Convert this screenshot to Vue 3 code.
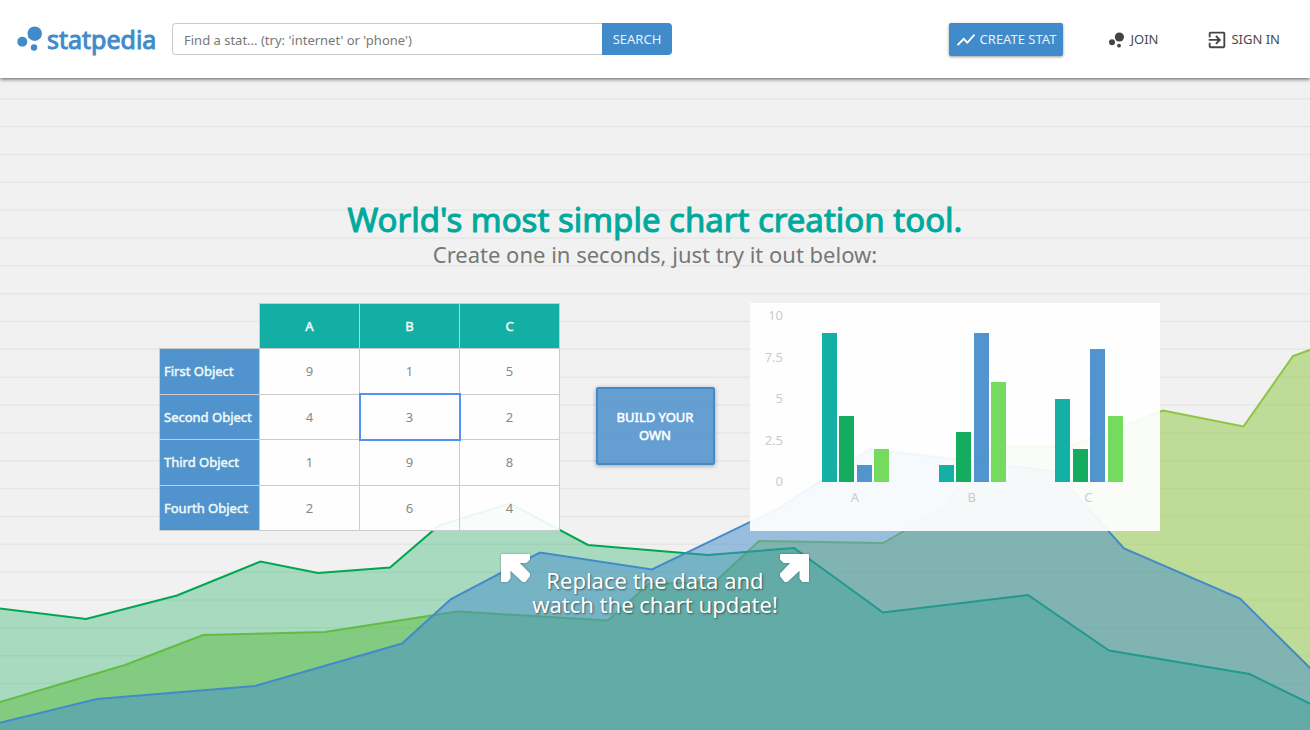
<script setup>
import { computed, ref } from 'vue'

const columns = ['A', 'B', 'C']
const rows = ref([
  { name: 'First Object', color: '#00a99d', values: [9, 1, 5] },
  { name: 'Second Object', color: '#00a651', values: [4, 3, 2] },
  { name: 'Third Object', color: '#428bca', values: [1, 9, 8] },
  { name: 'Fourth Object', color: '#68d850', values: [2, 6, 4] }
])
const selected = ref('1-1')
const query = ref('')

const baseline = 179
const unit = 16.6
const plotLeft = 46
const groupWidth = 116.7
const ticks = [10, 7.5, 5, 2.5, 0]

const bars = computed(() =>
  columns.flatMap((column, c) =>
    rows.value.map((row, r) => {
      const height = Math.min(10, Number(row.values[c]) || 0) * unit
      return {
        key: column + r,
        x: Math.round(plotLeft + c * groupWidth + 26 + r * 17.4),
        y: Math.round(baseline - height),
        height: baseline - Math.round(baseline - height),
        color: row.color
      }
    })
  )
)

const rules = Array.from({ length: 23 }, (_, i) => 98.7 + i * 27.85)
</script>

<template>
  <div class="page">
    <header class="topbar">
      <a class="logo" href="#">
        <svg width="27" height="26" viewBox="0 0 27 26" aria-hidden="true">
          <circle cx="17.7" cy="7.7" r="7.2" />
          <circle cx="5.3" cy="15.8" r="5" />
          <circle cx="17" cy="21.5" r="3.2" />
        </svg>
        <span>statpedia</span>
      </a>
      <form class="search" @submit.prevent>
        <input v-model="query" type="text" aria-label="Find a stat" placeholder="Find a stat... (try: 'internet' or 'phone')" />
        <button type="submit">SEARCH</button>
      </form>
      <nav class="actions">
        <a class="create" href="#">
          <svg width="22" height="22" viewBox="0 -1 24 24" aria-hidden="true">
            <path d="M3.5 18.49l6-6.01 4 4L22 6.92l-1.41-1.41-7.09 7.97-4-4L2 16.99z" />
          </svg>
          CREATE STAT
        </a>
        <a class="link" href="#">
          <svg width="18" height="18" viewBox="0 0 18 18" aria-hidden="true">
            <circle cx="11.4" cy="7" r="4.6" />
            <circle cx="4" cy="12.3" r="3" />
            <circle cx="11" cy="15.7" r="1.9" />
          </svg>
          JOIN
        </a>
        <a class="link" href="#">
          <svg width="22" height="22" viewBox="0 -1 24 24" aria-hidden="true">
            <path d="M10.09 15.59L11.5 17l5-5-5-5-1.41 1.41L12.67 11H3v2h9.67l-2.58 2.59zM19 3H5c-1.11 0-2 .9-2 2v4h2V5h14v14H5v-4H3v4c0 1.1.89 2 2 2h14c1.1 0 2-.9 2-2V5c0-1.1-.9-2-2-2z" />
          </svg>
          SIGN IN
        </a>
      </nav>
    </header>

    <main class="hero">
      <svg class="backdrop" viewBox="0 78 1310 652" preserveAspectRatio="xMidYMax slice" aria-hidden="true">
        <path v-for="y in rules" :key="y" class="rule" :d="`M-2000 ${y}H4000`" />
        <g class="lime">
          <path class="area" d="M-5 704L0 702 125 665 203 635 325 632 457 611.500 608 620.500 649 584 715 582 759 541 883 543 942 509 994 447 1071 446 1163 410.500 1243.500 426.500 1293 356 1315 348V735H-5z" />
          <path class="line" d="M-5 704L0 702 125 665 203 635 325 632 457 611.500 608 620.500 649 584 715 582 759 541 883 543 942 509 994 447 1071 446 1163 410.500 1243.500 426.500 1293 356 1315 348" />
        </g>
        <g class="green">
          <path class="area" d="M-5 608L86 619 177 595.500 260.500 561.500 318 573 390 567.500 439 525.500 510 503.500 588 545 708 555 794 548 883 612.500 1028 595 1109 650.500 1249.500 674 1315 706V735H-5z" />
          <path class="line" d="M-5 608L86 619 177 595.500 260.500 561.500 318 573 390 567.500 439 525.500 510 503.500 588 545 708 555 794 548 883 612.500 1028 595 1109 650.500 1249.500 674 1315 706" />
        </g>
        <g class="blue">
          <path class="area" d="M-5 724L97 699 255 686 402 643.500 451 599 540 552.500 652 569.500 779 508 870 449 1055 471.500 1124 548.500 1240 598.500 1315 673V735H-5z" />
          <path class="line" d="M-5 724L97 699 255 686 402 643.500 451 599 540 552.500 652 569.500 779 508 870 449 1055 471.500 1124 548.500 1240 598.500 1315 673" />
        </g>
      </svg>

      <h1>World's most simple chart creation tool.</h1>
      <p class="lead">Create one in seconds, just try it out below:</p>

      <section class="tool">
        <table>
          <thead>
            <tr>
              <td class="corner"></td>
              <th v-for="c in columns" :key="c" scope="col">{{ c }}</th>
            </tr>
          </thead>
          <tbody>
            <tr v-for="(row, r) in rows" :key="row.name">
              <th scope="row">{{ row.name }}</th>
              <td v-for="(c, i) in columns" :key="c" :class="{ selected: selected === `${r}-${i}` }">
                <input v-model="row.values[i]" type="text" inputmode="numeric" :aria-label="`${row.name} ${c}`" @focus="selected = `${r}-${i}`" />
              </td>
            </tr>
          </tbody>
        </table>

        <button class="build" type="button">BUILD YOUR OWN</button>

        <svg class="chart" width="410" height="228" viewBox="0 0 410 228" role="img" aria-label="Bar chart of the table data">
          <text v-for="t in ticks" :key="t" x="33" :y="baseline + 4 - t * unit" text-anchor="end">{{ t }}</text>
          <rect v-for="b in bars" :key="b.key" :x="b.x" :y="b.y" width="15" :height="b.height" :fill="b.color" />
          <text v-for="(c, i) in columns" :key="c" :x="plotLeft + 59 + i * groupWidth" y="199" text-anchor="middle">{{ c }}</text>
        </svg>
      </section>

      <div class="hint">
        <svg width="32" height="32" viewBox="0 0 32 32" aria-hidden="true">
          <path d="M2 3H29V7L26 10H17.5L29 22V24L25 29H23L9.500 16.500V26L7 29H2z" />
        </svg>
        <p>Replace the data and<br />watch the chart update!</p>
        <svg width="32" height="32" viewBox="0 0 32 32" aria-hidden="true">
          <path d="M30 3H3V7L6 10H14.500L3 22V24L7 29H9L22.500 16.500V26L25 29H30z" />
        </svg>
      </div>
    </main>
  </div>
</template>

<style>
body {
  margin: 0;
}
</style>

<style scoped>
* {
  box-sizing: border-box;
}
.page {
  min-height: 100vh;
  display: flex;
  flex-direction: column;
  background: #f1f1f1;
  font-family: 'Noto Sans', 'Open Sans', sans-serif;
  font-size: 13px;
  color: #777;
}
a {
  text-decoration: none;
}
button,
input {
  font: inherit;
}
.topbar {
  position: relative;
  z-index: 1;
  display: flex;
  align-items: center;
  height: 78px;
  padding: 0 30px 0 17px;
  background: #fff;
  box-shadow: 0 1px 4px rgba(0, 0, 0, 0.65);
}
.logo {
  display: flex;
  align-items: center;
  gap: 3px;
  width: 155px;
  color: #428bca;
  font-size: 25px;
  line-height: 30px;
  -webkit-text-stroke: 1px #428bca;
}
.logo svg {
  fill: #428bca;
}
.search {
  display: flex;
  flex: 0 1 500px;
  height: 32px;
}
.search input {
  flex: 1;
  min-width: 0;
  padding: 1px 11px 0;
  border: 1px solid #ccc;
  border-right: 0;
  border-radius: 4px 0 0 4px;
  background: #fff;
  color: #555;
}
.search input::placeholder {
  color: #777;
}
.search button {
  width: 70px;
  padding: 0;
  border: 0;
  border-radius: 0 4px 4px 0;
  background: #428bca;
  color: #e6f0f9;
}
.actions {
  display: flex;
  align-items: center;
  margin-left: auto;
}
.create {
  display: flex;
  align-items: center;
  gap: 3px;
  height: 33px;
  padding: 0 7px 0 6px;
  border-radius: 2px;
  background: #428bca;
  color: #e6f0f9;
  box-shadow: 0 1px 3px rgba(0, 0, 0, 0.4);
}
.create svg {
  fill: #fff;
}
.link {
  display: flex;
  align-items: center;
  gap: 4px;
  margin-left: 45px;
  color: #4a4a4a;
}
.link + .link {
  gap: 3px;
  margin-left: 48px;
}
.link svg {
  fill: #444;
}
.hero {
  position: relative;
  flex: 1;
  display: flex;
  flex-direction: column;
  align-items: center;
  padding: 122px 20px 20px;
}
.backdrop {
  position: absolute;
  inset: 0;
  width: 100%;
  height: 100%;
}
.rule {
  stroke: #e6e6e6;
  stroke-width: 1.5;
}
.line {
  fill: none;
  stroke-width: 2;
}
.lime .area {
  fill: rgba(140, 198, 63, 0.5);
}
.lime .line {
  stroke: #8cc63f;
}
.green .area {
  fill: rgba(0, 166, 81, 0.3);
}
.green .line {
  stroke: #00a651;
}
.blue .area {
  fill: rgba(66, 139, 202, 0.5);
}
.blue .line {
  stroke: #428bca;
}
h1,
.lead,
.tool,
.hint {
  position: relative;
  margin: 0;
}
h1 {
  color: #00a99d;
  font-size: 33px;
  font-weight: 400;
  line-height: 40px;
  -webkit-text-stroke: 1px #00a99d;
}
.lead {
  font-size: 22px;
  line-height: 28px;
}
.tool {
  display: flex;
  align-items: center;
  justify-content: space-between;
  width: 100%;
  max-width: 1010px;
  margin-top: 35px;
  padding-left: 9px;
}
table {
  width: 401px;
  height: 228px;
  border-collapse: collapse;
  table-layout: fixed;
}
thead tr {
  height: 45px;
}
th,
td {
  padding: 0;
  border: 1px solid #ccc;
  background: rgba(255, 255, 255, 0.92);
  text-align: center;
}
th {
  background: rgba(0, 169, 157, 0.92);
  color: #eef8f8;
  font-weight: 400;
  -webkit-text-stroke: 0.5px #eef8f8;
}
tbody th {
  padding-left: 4px;
  background: rgba(66, 139, 202, 0.92);
  text-align: left;
  white-space: nowrap;
}
.corner {
  border-top: 0;
  border-left: 0;
  background: none;
}
td input {
  display: block;
  width: 100%;
  padding: 0;
  border: 0;
  outline: 0;
  background: none;
  color: #888;
  text-align: center;
}
td.selected {
  outline: 2px solid #5292f7;
  outline-offset: -1px;
}
.build {
  width: 119px;
  height: 78px;
  margin-top: 18px;
  padding: 0 16px;
  border: 2px solid #428bca;
  border-radius: 2px;
  background: rgba(66, 139, 202, 0.8);
  color: #fff;
  line-height: 18px;
  -webkit-text-stroke: 0.5px #fff;
  box-shadow: 0 1px 4px rgba(0, 0, 0, 0.35);
}
.chart {
  background: rgba(255, 255, 255, 0.92);
}
.chart text {
  fill: #ccc;
  font-size: 13px;
}
.chart rect {
  fill-opacity: 0.92;
}
.hint {
  display: flex;
  align-items: flex-start;
  margin-top: 21px;
  color: #fff;
}
.hint p {
  margin: 16px 0 0;
  font-size: 22px;
  line-height: 24px;
  text-align: center;
  text-shadow: 1px 1px 2px rgba(0, 0, 0, 0.5);
}
.hint svg {
  fill: #fff;
  stroke: #fff;
  stroke-width: 2;
  stroke-linejoin: round;
  filter: drop-shadow(0 0 1px rgba(0, 0, 0, 0.3));
}
</style>
